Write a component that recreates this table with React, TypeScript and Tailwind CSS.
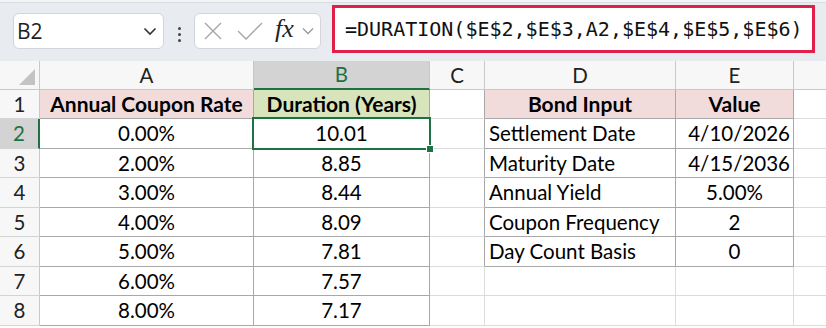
import React from "react";

const rowH = [29, 29, 30, 29, 30, 29, 30, 29, 30];

const A = ["Annual Coupon Rate", "0.00%", "2.00%", "3.00%", "4.00%", "5.00%", "6.00%", "8.00%"];
const B = ["Duration (Years)", "10.01", "8.85", "8.44", "8.09", "7.81", "7.57", "7.17"];
const D = ["Bond Input", "Settlement Date", "Maturity Date", "Annual Yield", "Coupon Frequency", "Day Count Basis"];
const E = ["Value", "4/10/2026", "4/15/2036", "5.00%", "2", "0"];

const cellFont = { fontFamily: "Lato, 'Open Sans', sans-serif" };

function Toolbar() {
  return (
    <div className="h-[61px] bg-[#e8ebef] relative flex items-start">
      <div className="absolute left-0 top-0 w-full h-[3px] bg-[#f3f4f6] border-b border-[#d9dce0]" />
      <div className="ml-[13px] mt-[13px] w-[151px] h-[36px] bg-white border border-[#d2d5d9] rounded-[6px] flex items-center justify-between pl-[3px] pr-[6px]">
        <span className="text-[21px] text-[#1f1f1f] leading-none" style={{ fontFamily: "'Open Sans', sans-serif" }}>B2</span>
        <svg width="14" height="9" viewBox="0 0 14 9" className="mt-[1px]">
          <path d="M1.5 1.5 L7 7 L12.5 1.5" fill="none" stroke="#333" strokeWidth="1.6" />
        </svg>
      </div>
      <div className="ml-[14px] mt-[27px] flex flex-col gap-[3px]">
        <div className="w-[3px] h-[3px] rounded-full bg-[#444]" />
        <div className="w-[3px] h-[3px] rounded-full bg-[#444]" />
        <div className="w-[3px] h-[3px] rounded-full bg-[#444]" />
      </div>
      <div className="ml-[13px] mt-[13px] w-[127px] h-[36px] bg-white border border-[#d2d5d9] rounded-[6px] flex items-center">
        <svg width="18" height="18" viewBox="0 0 18 18" className="ml-[9px]">
          <path d="M1 1 L17 17 M17 1 L1 17" fill="none" stroke="#a6a6a6" strokeWidth="1.4" />
        </svg>
        <svg width="26" height="18" viewBox="0 0 26 18" className="ml-[15px]">
          <path d="M1 9 L9 17 L25 1" fill="none" stroke="#a6a6a6" strokeWidth="1.4" />
        </svg>
        <span className="ml-[12px] text-[26px] italic leading-none text-[#222] -mt-[4px]" style={{ fontFamily: "'Liberation Serif', serif" }}>fx</span>
        <svg width="12" height="8" viewBox="0 0 12 8" className="ml-[8px]">
          <path d="M1 1.5 L6 6.5 L11 1.5" fill="none" stroke="#999" strokeWidth="1.3" />
        </svg>
      </div>
      <div className="ml-[11px] mt-[5px] w-[483px] h-[48px] bg-white border-[3px] border-[#e0204b] flex items-center pl-[10px]">
        <span className="text-[20px] text-[#111] leading-none" style={{ fontFamily: "'DejaVu Sans Mono', monospace" }}>
          =DURATION($E$2,$E$3,A2,$E$4,$E$5,$E$6)
        </span>
      </div>
    </div>
  );
}

export default function App() {
  const light = "border-[#dcdcdc]";
  const dark = "border-[#a8a8a8]";
  const rows: React.ReactNode[] = [];
  const reg = " text-[20.5px]";
  const bold = " text-[21px] font-bold";

  const letters = ["A", "B", "C", "D", "E"];
  rows.push(
    <div key="corner" className="bg-[#f7f7f7] border-r border-b border-[#c9c9c9] relative">
      <svg width="16" height="16" viewBox="0 0 16 16" className="absolute right-[4px] bottom-[4px]">
        <path d="M16 0 L16 16 L0 16 Z" fill="#c3c3c3" />
      </svg>
    </div>
  );
  letters.forEach((l) => {
    const sel = l === "B";
    rows.push(
      <div
        key={"h" + l}
        className={
          "flex items-center justify-center text-[20.5px] border-r " +
          (sel
            ? "bg-[#d3d3d3] text-[#1e7145] border-b-2 border-b-[#1e7145] border-r-[#c9c9c9]"
            : "bg-[#f7f7f7] text-[#222] border-b border-[#c9c9c9]")
        }
        style={cellFont}
      >
        {l}
      </div>
    );
  });
  rows.push(<div key="hrest" className="bg-[#f7f7f7] border-b border-[#c9c9c9]" />);

  for (let r = 1; r <= 8; r++) {
    const i = r - 1;
    const selRow = r === 2;
    rows.push(
      <div
        key={"rh" + r}
        className={
          "flex items-center justify-center text-[20.5px] border-b border-[#d4d4d4] " +
          (selRow
            ? "bg-[#d3d3d3] text-[#1e7145] border-r-2 border-r-[#1e7145]"
            : "bg-[#f7f7f7] text-[#222] border-r border-r-[#c9c9c9]")
        }
        style={cellFont}
      >
        {r}
      </div>
    );
    rows.push(
      <div
        key={"a" + r}
        className={
          "flex items-center justify-center text-black border-r border-b " +
          dark +
          (r === 1 ? " bg-[#f2dcdb]" + bold : " bg-white" + reg)
        }
        style={cellFont}
      >
        {A[i]}
      </div>
    );
    rows.push(
      <div
        key={"b" + r}
        className={
          "relative flex items-center justify-center text-black border-r border-b " +
          dark +
          (r === 1 ? " bg-[#d8e4bc]" + bold : " bg-white" + reg) +
          (r === 2 ? " z-10" : "")
        }
        style={cellFont}
      >
        {B[i]}
        {r === 2 && (
          <>
            <div className="absolute left-[-2px] top-[-2px] right-[-2px] bottom-[-2px] border-2 border-[#1e7145] pointer-events-none" />
            <div className="absolute right-[-5px] bottom-[-5px] w-[8px] h-[8px] bg-[#1e7145] border border-white" />
          </>
        )}
      </div>
    );
    rows.push(
      <div
        key={"c" + r}
        className={"bg-white border-b " + light + " border-r " + (r <= 6 ? "border-r-[#a8a8a8]" : "border-r-[#dcdcdc]")}
      />
    );
    if (r <= 6) {
      rows.push(
        <div
          key={"d" + r}
          className={
            "flex items-center text-black border-r border-b " +
            dark +
            (r === 1 ? " bg-[#f2dcdb] justify-center" + bold : " bg-white pl-[4px]" + reg)
          }
          style={cellFont}
        >
          {D[i]}
        </div>
      );
      const right = r === 2 || r === 3;
      rows.push(
        <div
          key={"e" + r}
          className={
            "flex items-center text-black border-r border-b " +
            dark +
            (r === 1 ? " bg-[#f2dcdb] justify-center" + bold : " bg-white" + reg) +
            (r !== 1 ? (right ? " justify-end pr-[3px]" : " justify-center") : "")
          }
          style={cellFont}
        >
          {E[i]}
        </div>
      );
    } else {
      rows.push(<div key={"d" + r} className={"bg-white border-r border-b " + light} />);
      rows.push(<div key={"e" + r} className={"bg-white border-r border-b " + light} />);
    }
    rows.push(<div key={"rest" + r} className={"bg-white border-b " + light} />);
  }

  return (
    <div className="w-[826px] h-[328px] overflow-hidden bg-white">
      <Toolbar />
      <div
        className="grid"
        style={{
          gridTemplateColumns: "40px 214px 176px 55px 191px 118px 1fr",
          gridTemplateRows: rowH.map((h) => h + "px").join(" "),
        }}
      >
        {rows}
      </div>
    </div>
  );
}
